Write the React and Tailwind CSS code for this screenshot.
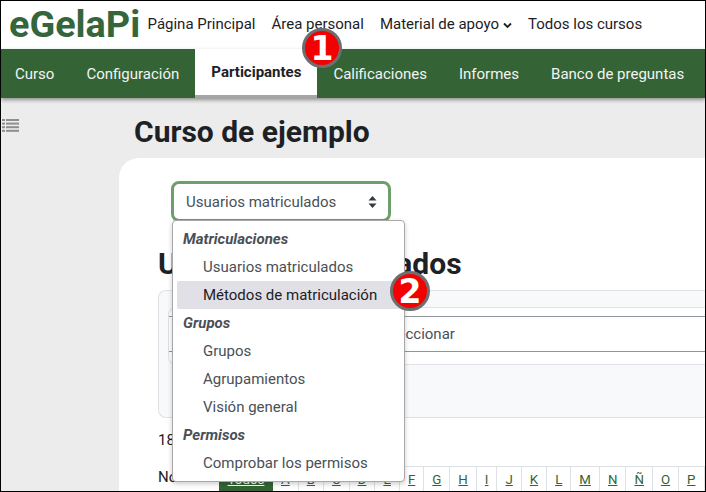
const topLinks = ['Página Principal', 'Área personal'];
const tabs = ['Curso', 'Configuración', 'Participantes', 'Calificaciones', 'Informes', 'Banco de preguntas'];
const letters = ['A', 'B', 'C', 'D', 'E', 'F', 'G', 'H', 'I', 'J', 'K', 'L', 'M', 'N', 'Ñ', 'O', 'P', 'Q'];

const menu = [
  { group: 'Matriculaciones', items: ['Usuarios matriculados', 'Métodos de matriculación'] },
  { group: 'Grupos', items: ['Grupos', 'Agrupamientos', 'Visión general'] },
  { group: 'Permisos', items: ['Comprobar los permisos'] },
];

function Badge({ n, className }) {
  return (
    <div className={`absolute z-20 w-[40px] h-[40px] rounded-full bg-[#f50000] border-[3px] border-[#6e6e6e] flex items-center justify-center text-white text-[33px] leading-none font-bold font-['DejaVu_Sans',sans-serif] ${className}`}>
      {n}
    </div>
  );
}

export default function App() {
  return (
    <div className="relative w-[706px] h-[492px] overflow-hidden border border-black bg-[#ececec] font-['Roboto',sans-serif] text-[#1d2125] text-[15px] flex flex-col">
      <header className="h-[48px] shrink-0 bg-white flex items-center pl-[8px]">
        <span className="w-[138.5px] shrink-0 text-[37.8px] leading-none font-bold text-[#35653a]">eGelaPi</span>
        {topLinks.map((l) => (
          <span key={l} className="mr-[16px] -mt-[1px]">{l}</span>
        ))}
        <span className="flex items-center gap-[4px] mr-[16px] -mt-[1px]">
          Material de apoyo
          <svg width="9" height="7" viewBox="0 0 9 7" className="mt-[2px]"><path d="M1 1.5l3.5 3.5L8 1.5" fill="none" stroke="#1d2125" strokeWidth="1.8" /></svg>
        </span>
        <span className="-mt-[1px]">Todos los cursos</span>
      </header>

      <nav className="h-[49px] shrink-0 bg-[#346435] flex shadow-[0_2px_4px_rgba(0,0,0,0.4)] z-10 text-white">
        <div className="flex -ml-[2px]">
          {tabs.map((t) => (
            <div
              key={t}
              className={t === 'Participantes'
                ? 'px-[16px] flex items-center bg-white text-[#1d2125] font-bold border-b-[3px] border-[#a5a5a5]'
                : 'px-[16px] pt-[1px] flex items-center text-[#f3f3f3]'}
            >
              {t}
            </div>
          ))}
        </div>
      </nav>

      <div className="flex flex-1 min-h-0">
        <aside className="w-[118px] shrink-0 pt-[21px] pl-[1px]">
          <svg width="17" height="13" viewBox="0 0 17 13" fill="#8e8e8e">
            <rect x="0" y="0" width="3" height="2" /><rect x="4" y="0" width="13" height="2" />
            <rect x="0" y="3.6" width="3" height="2" /><rect x="4" y="3.6" width="13" height="2" />
            <rect x="0" y="7.2" width="3" height="2" /><rect x="4" y="7.2" width="13" height="2" />
            <rect x="0" y="10.8" width="3" height="2" /><rect x="4" y="10.8" width="13" height="2" />
          </svg>
        </aside>

        <main className="flex-1 min-w-0">
          <h1 className="text-[30px] leading-[34px] font-bold pl-[15px] pt-[17px] h-[60px]">Curso de ejemplo</h1>

          <div className="bg-white rounded-tl-[20px] h-[400px] pl-[39px] pt-[23px]">
            <div className="ml-[13px] w-[220px] h-[41px] rounded-[8px] border-[3px] border-[#6d9e6b] flex items-center justify-between pl-[12px] pr-[11px] pt-[1px] text-[#495057] text-[15px]">
              Usuarios matriculados
              <svg width="9" height="12" viewBox="0 0 9 12" fill="#343a40"><path d="M4.5 0L8.5 4.6H.5zM4.5 12L.5 7.4h8z" /></svg>
            </div>

            <h2 className="text-[30px] leading-[34px] font-bold mt-[25px] whitespace-nowrap">Usuarios matriculados</h2>

            <div className="mt-[9px] h-[128px] border border-[#dee2e6] rounded-l-[8px] border-r-0 bg-[#f8f9fa] flex flex-col">
              <div className="h-[16px] shrink-0" />
              <div className="ml-[9px] h-[58px] shrink-0 border-y border-l border-[#dee2e6] rounded-l-[8px] bg-white pt-[8px]">
                <div className="h-[36px] border-y border-[#8f959e] flex items-center pl-[208px] pt-[1px] text-[#495057] text-[15px]">
                  Seleccionar
                </div>
              </div>
            </div>

            <p className="mt-[10px] h-[24px] text-[15px] leading-[24px]">18 participantes encontrados</p>

            <div className="mt-[14px] flex items-start">
              <span className="w-[61px] shrink-0 leading-[22px]">Nombre</span>
              <div className="flex border-t border-[#dee2e6] text-[13.3px] text-[#346435] leading-[25px]">
                <span className="w-[54px] text-center bg-[#346435] text-white underline">Todos</span>
                {letters.map((l) => (
                  <span key={l} className="px-[8px] border-r border-[#dee2e6] underline">{l}</span>
                ))}
              </div>
            </div>
          </div>
        </main>
      </div>

      <div className="absolute left-[171px] top-[219px] w-[233px] h-[262px] bg-white border border-[#a8a8a8] rounded-[4px] shadow-[0_2px_5px_rgba(0,0,0,0.2)] pt-[4px] px-[4px] text-[15px] text-[#495057]">
        {menu.map((m) => (
          <div key={m.group}>
            <div className="h-[28px] flex items-center pl-[6px] pt-[1px] font-bold italic">{m.group}</div>
            {m.items.map((i) => (
              <div
                key={i}
                className={i === 'Métodos de matriculación'
                  ? 'h-[28px] flex items-center pl-[26px] pt-[1px] rounded-[2px] bg-[#e0e0e6] text-[#1d2125]'
                  : 'h-[28px] flex items-center pl-[26px] pt-[1px]'}
              >
                {i}
              </div>
            ))}
          </div>
        ))}
      </div>

      <Badge n="1" className="left-[301px] top-[27px]" />
      <Badge n="2" className="left-[389px] top-[270px]" />
    </div>
  );
}
